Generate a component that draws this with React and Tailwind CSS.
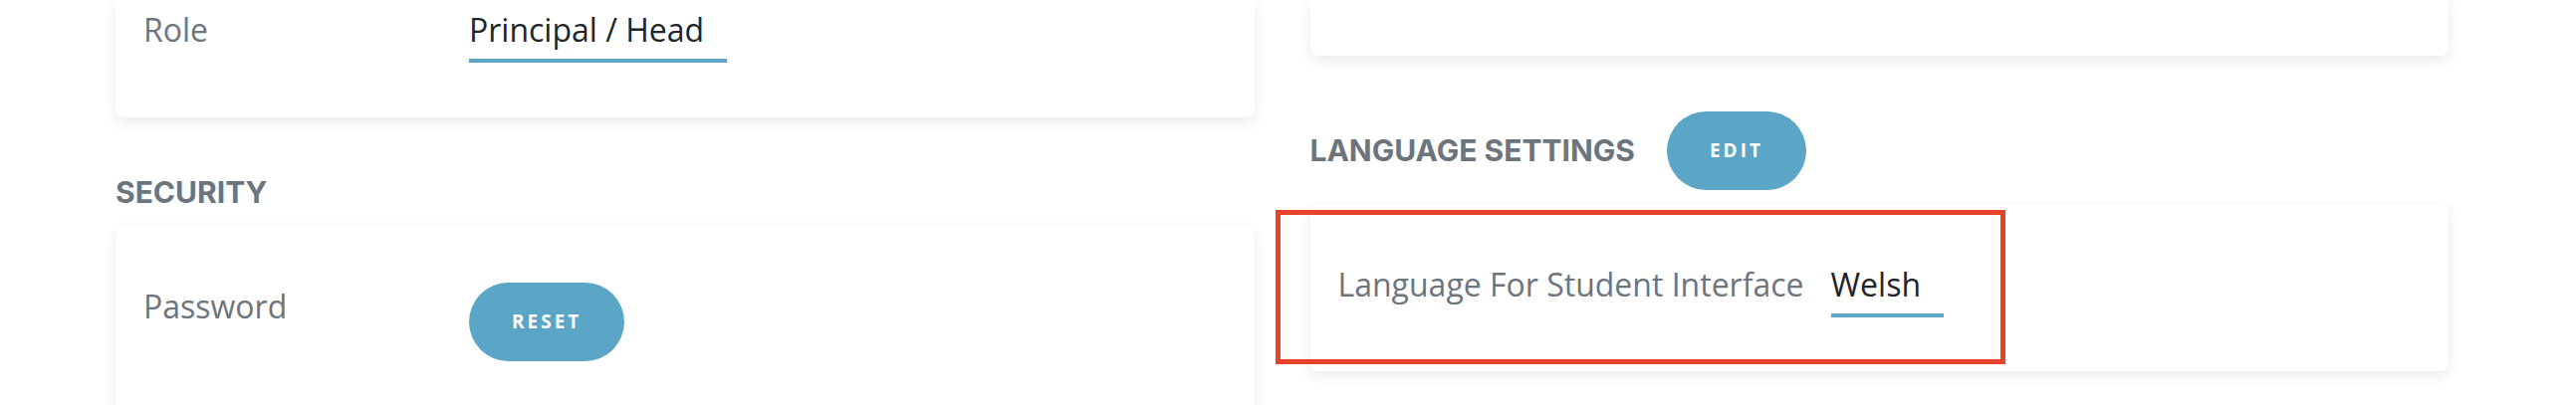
import React from 'react';

const cardClass = "bg-white shadow-[0_4px_14px_rgba(0,0,0,0.09)]";

const FieldRow = ({ label, children }) => (
  <div className="flex items-start">
    <div className="min-w-[327px] pr-[27px] text-[32px] leading-[48px] text-[#6c757d]">
      {label}
    </div>
    {children}
  </div>
);

const Value = ({ text }) => (
  <span className="inline-block pr-[23px] pb-[5px] border-b-4 border-[#5ba5c6] text-[32px] leading-[48px] text-[#212529]">
    {text}
  </span>
);

const PillButton = ({ children }) => (
  <button
    type="button"
    className="h-[79px] px-[43px] rounded-full bg-[#5ba5c6] text-white text-[19px] font-bold tracking-[3px] font-['Open_Sans',sans-serif]"
  >
    {children}
  </button>
);

const SectionTitle = ({ children }) => (
  <h2 className="text-[30px] leading-[39px] font-bold text-[#6c757d] font-['Inter',sans-serif]">
    {children}
  </h2>
);

export default function App() {
  return (
    <div className="min-h-screen bg-white font-['Open_Sans',sans-serif]">
      <div className="grid grid-cols-2 gap-x-[56px] pl-[116px] pr-[128px]">

        {/* Left column */}
        <div>
          <div className={`${cardClass} rounded-b-lg pt-[6px] pb-[55px] px-[28px]`}>
            <FieldRow label="Role">
              <Value text="Principal / Head" />
            </FieldRow>
          </div>

          <section className="mt-[56px]">
            <div className="h-[39px] flex items-center">
              <SectionTitle>SECURITY</SectionTitle>
            </div>
            <div className={`${cardClass} mt-[15px] rounded-lg pt-[56px] pb-[56px] px-[28px]`}>
              <FieldRow label="Password">
                <PillButton>RESET</PillButton>
              </FieldRow>
            </div>
          </section>
        </div>

        {/* Right column */}
        <div>
          <div className={`${cardClass} rounded-b-lg h-[56px]`}></div>

          <section className="mt-[56px]">
            <div className="flex items-center gap-[32px]">
              <SectionTitle>LANGUAGE SETTINGS</SectionTitle>
              <PillButton>EDIT</PillButton>
            </div>
            <div className={`${cardClass} relative mt-[15px] rounded-lg pt-[56px] pb-[54px] px-[28px]`}>
              <FieldRow label="Language For Student Interface">
                <Value text="Welsh" />
              </FieldRow>
              {/* annotation highlight */}
              <div className="absolute left-[-35px] top-[5px] w-[733px] h-[155px] border-[5px] border-[#e8432a] pointer-events-none"></div>
            </div>
          </section>
        </div>

      </div>
    </div>
  );
}
